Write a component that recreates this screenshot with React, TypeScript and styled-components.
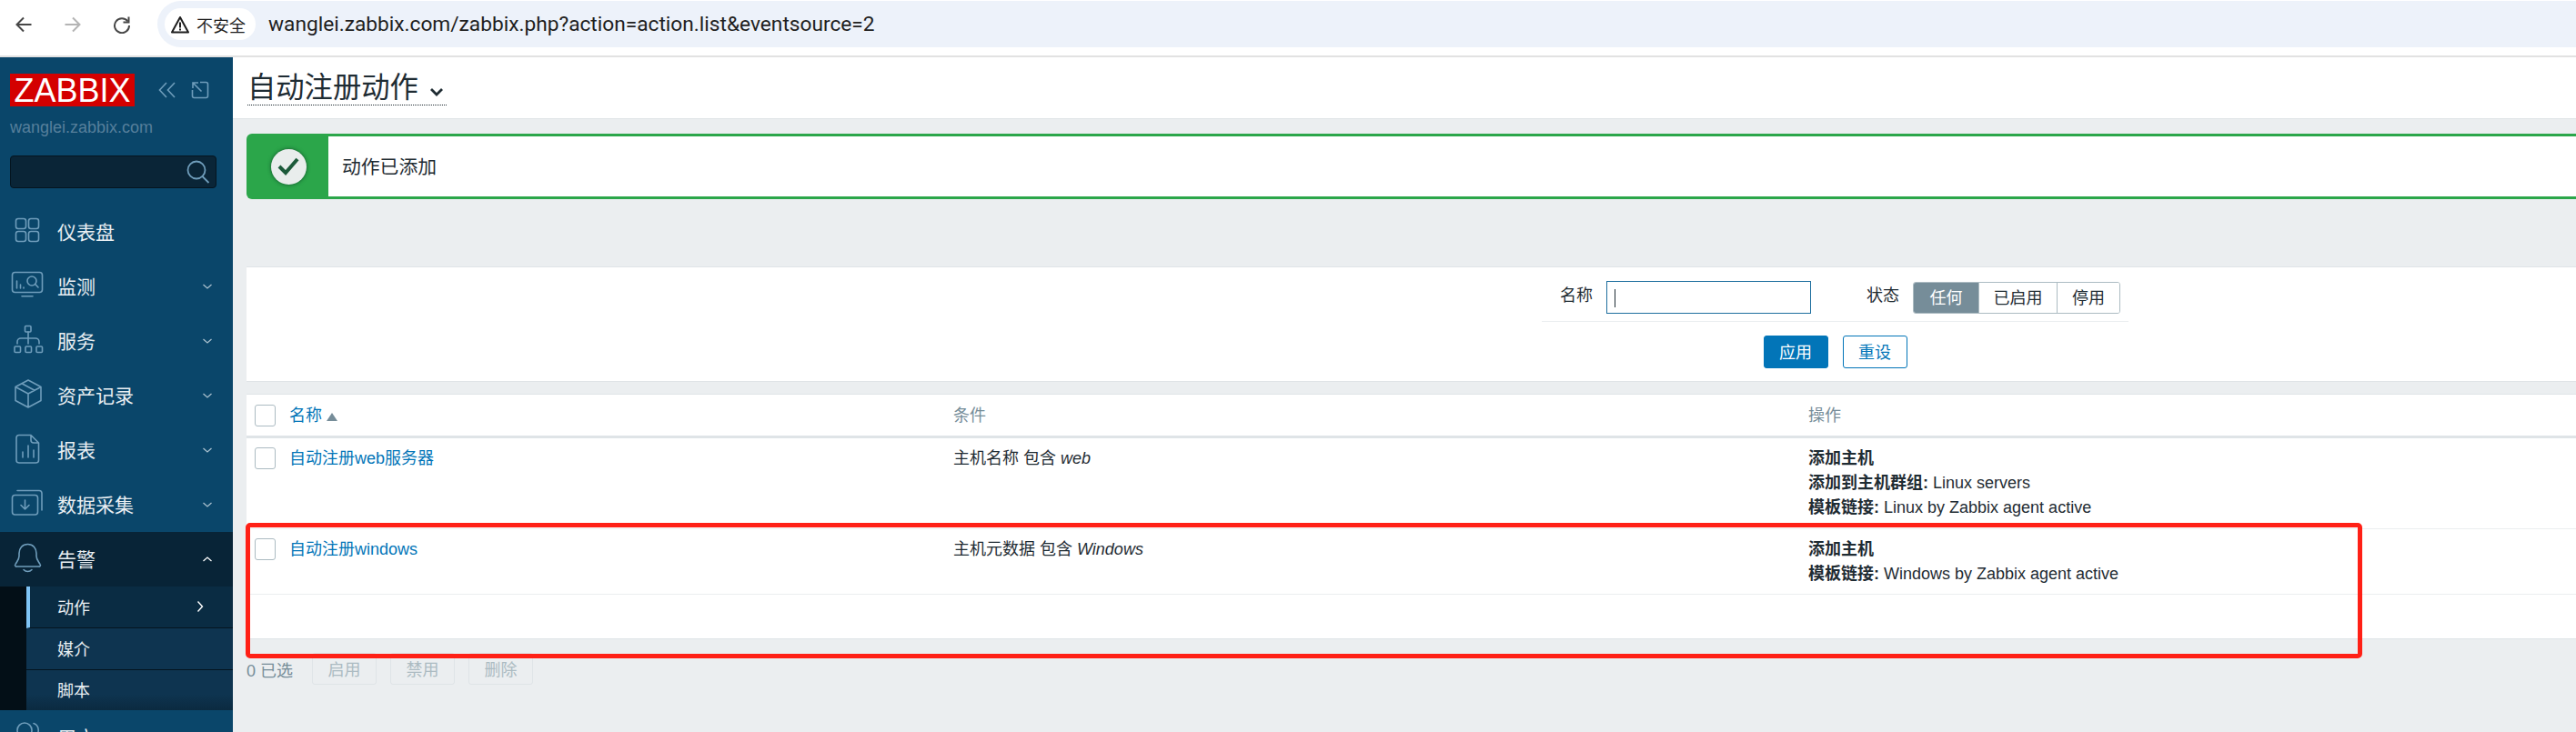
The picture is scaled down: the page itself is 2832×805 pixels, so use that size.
import React from "react"
import styled, { createGlobalStyle } from "styled-components"

const GlobalStyle = createGlobalStyle`
    html, body {
        margin: 0;
        height: 100%;
        overflow: hidden;
        background: #ebeef0;
        font-family: "Liberation Sans", "Noto Sans CJK SC", sans-serif;
        color: #1f2c33;
    }
    * {
        box-sizing: border-box;
    }
`

const Page = styled.div`
    position: relative;
    height: 805px;
    display: flex;
    flex-direction: column;
    overflow: hidden;
`

const Toolbar = styled.div`
    height: 63px;
    flex: none;
    display: flex;
    background: #fff;
    border-bottom: 2px solid #e2e2e2;
    padding-top: 1px;
`

const NavIcons = styled.div`
    width: 173px;
    height: 51px;
    flex: none;
    display: flex;
    align-items: center;
    padding-left: 16px;
    gap: 34px;
`

const AddressBar = styled.div`
    flex: 1;
    height: 51px;
    display: flex;
    align-items: center;
    background: #edf2fa;
    border-radius: 26px 0 0 26px;
    padding-left: 8px;
`

const SecurityChip = styled.div`
    width: 100px;
    height: 35px;
    display: flex;
    align-items: center;
    gap: 7px;
    padding-left: 6px;
    background: #fff;
    border-radius: 18px;
    font-size: 18px;
    color: #1f1f1f;
`

const Url = styled.div`
    margin-left: 14px;
    font-family: Roboto, sans-serif;
    font-size: 22.7px;
    color: #1f1f1f;
`

const Main = styled.div`
    flex: 1;
    display: flex;
    min-height: 0;
`

const Sidebar = styled.aside`
    width: 256px;
    flex: none;
    background: #0a466a;
    overflow: hidden;
`

const BrandRow = styled.div`
    display: flex;
    align-items: center;
    margin-top: 18px;
    padding-left: 11px;
    color: #6f9dbb;
`

const Logo = styled.div`
    width: 137px;
    height: 36px;
    background: #d40000;
    color: #fff;
    font-size: 36px;
    line-height: 37px;
    text-align: center;
    margin-right: 26px;
`

const HostName = styled.div`
    margin: 12px 0 0 11px;
    font-size: 18px;
    line-height: 22px;
    color: #567f9b;
`

const SearchBox = styled.div`
    display: flex;
    align-items: center;
    justify-content: flex-end;
    width: 227px;
    height: 36px;
    margin: 20px 0 18px 11px;
    padding-right: 6px;
    background: #0a2537;
    border: 1px solid #04141f;
    border-radius: 4px;
    color: #6f9dbb;
`

const MenuRow = styled.div<{ $open?: boolean }>`
    height: 60px;
    display: flex;
    align-items: center;
    padding-left: 10px;
    font-size: 21px;
    color: #e8eef2;
    background: ${p => (p.$open ? "#082437" : "transparent")};
`

const MenuIcon = styled.svg`
    width: 40px;
    height: 40px;
    flex: none;
    margin-right: 13px;
    fill: none;
    stroke: #6f9dbb;
    stroke-width: 1.6;
    stroke-linecap: round;
    stroke-linejoin: round;
`

const MenuLabel = styled.span`
    flex: 1;
    padding-bottom: 2px;
`

const Caret = styled.svg<{ $bright?: boolean }>`
    width: 12px;
    height: 8px;
    flex: none;
    margin-right: 22px;
    fill: none;
    stroke: ${p => (p.$bright ? "#fff" : "#a9c0ce")};
    stroke-width: 1.3;
`

const SubMenu = styled.div`
    padding-left: 29px;
    background: #030f17;
`

const SubItem = styled.div<{ $active?: boolean; $last?: boolean }>`
    height: ${p => (p.$last ? "44px" : "46px")};
    display: flex;
    align-items: center;
    padding-left: ${p => (p.$active ? "30px" : "34px")};
    padding-bottom: 2px;
    font-size: 18px;
    color: #e8eef2;
    border-left: ${p => (p.$active ? "4px solid #7fc4f5" : "0")};
    border-bottom: ${p => (p.$last ? "0" : "1px solid #04141f")};
    background: ${p =>
        p.$active
            ? "#0a2c43"
            : p.$last
            ? "linear-gradient(#0e3450 60%, #0b2a40)"
            : "#0e3450"};
`

const SubCaret = styled.svg`
    width: 8px;
    height: 14px;
    margin-left: auto;
    margin-right: 32px;
    fill: none;
    stroke: #fff;
    stroke-width: 1.4;
`

const Content = styled.main`
    flex: 1;
    min-width: 0;
`

const PageHeader = styled.header`
    height: 68px;
    background: #fff;
    border-bottom: 1px solid #dfe4e7;
    padding: 15px 0 0 16px;
`

const Title = styled.div`
    display: inline-flex;
    align-items: center;
    height: 38px;
    width: 219px;
    font-size: 31.3px;
    line-height: 38px;
    border-bottom: 1px dotted #1f2c33;
`

const TitleCaret = styled.svg`
    width: 16px;
    height: 10px;
    margin-left: 12px;
    margin-top: 8px;
    fill: none;
    stroke: #1f2c33;
    stroke-width: 2.8;
`

const Message = styled.div`
    display: flex;
    height: 72px;
    margin: 16px 0 74px 15px;
    background: #2ba64a;
    border-radius: 6px 0 0 6px;
`

const MessageIcon = styled.div`
    width: 90px;
    flex: none;
    display: flex;
    align-items: center;
    justify-content: center;
    padding-left: 2px;
`

const CheckCircle = styled.div`
    width: 39px;
    height: 39px;
    border-radius: 50%;
    display: flex;
    align-items: center;
    justify-content: center;
    background: #e9edec;
    box-shadow: 0 0 4px #14532d;
`

const MessageBody = styled.div`
    flex: 1;
    margin: 3px 0;
    display: flex;
    align-items: center;
    padding: 0 0 3px 15px;
    background: #fff;
    font-size: 20.8px;
`

const FilterPanel = styled.section`
    height: 127px;
    margin-left: 15px;
    padding: 15px 0 0 1424px;
    background: #fff;
    border-top: 1px solid #dfe4e7;
    border-bottom: 1px solid #dfe4e7;
`

const FilterInner = styled.div`
    width: 645px;
`

const FilterRow = styled.div`
    height: 45px;
    display: flex;
    align-items: flex-start;
    padding-left: 20px;
    border-bottom: 1px solid #ebeef0;
    font-size: 18px;
`

const FilterLabel = styled.label`
    line-height: 33px;
    margin-right: 15px;
`

const NameInput = styled.div`
    width: 225px;
    height: 36px;
    margin-right: 61px;
    padding: 8px 0 0 8px;
    border: 1px solid #1f6f9f;
`

const InputCursor = styled.div`
    width: 1px;
    height: 20px;
    background: #1f2c33;
`

const Segments = styled.div`
    display: flex;
    height: 35px;
    margin-top: 1px;
    border: 1px solid #acbbc2;
    border-radius: 3px;
    overflow: hidden;
`

const Segment = styled.div<{ $active?: boolean; $width: number }>`
    width: ${p => p.$width}px;
    display: flex;
    align-items: center;
    justify-content: center;
    padding-bottom: 3px;
    background: ${p => (p.$active ? "#768d99" : "#fff")};
    color: ${p => (p.$active ? "#fff" : "#1f2c33")};
    border-left: ${p => (p.$active ? "0" : "1px solid #acbbc2")};
`

const FilterActions = styled.div`
    display: flex;
    justify-content: center;
    gap: 16px;
    margin-top: 15px;
`

const Button = styled.button<{ $alt?: boolean }>`
    width: 71px;
    height: 36px;
    padding: 0 0 2px;
    font: inherit;
    font-size: 18px;
    border: 1px solid #0275b8;
    border-radius: 3px;
    background: ${p => (p.$alt ? "#fff" : "#0275b8")};
    color: ${p => (p.$alt ? "#0275b8" : "#fff")};
`

const ListTable = styled.table`
    width: calc(100% - 15px);
    margin: 13px 0 0 15px;
    border-collapse: separate;
    border-spacing: 0;
    table-layout: fixed;
    background: #fff;
    font-size: 18px;
`

const HeadCell = styled.th`
    height: 49px;
    padding: 0 0 3px;
    text-align: left;
    font-weight: normal;
    color: #768d99;
    border-top: 1px solid #dfe4e7;
    border-bottom: 3px solid #dfe4e7;
`

const CheckHeadCell = styled(HeadCell)`
    padding: 0;
`

const Cell = styled.td`
    padding: 9px 0 0;
    vertical-align: top;
    line-height: 27px;
    border-bottom: 1px solid #ebeef0;
`

const CheckCell = styled(Cell)`
    padding: 10px 0 0 9px;
    line-height: 0;
`

const LastCell = styled(Cell)`
    border-bottom: 1px solid #dfe4e7;
`

const CheckBox = styled.span`
    display: inline-block;
    width: 23px;
    height: 24px;
    border: 1px solid #acbbc2;
    border-radius: 3px;
    background: #fff;
    vertical-align: middle;
`

const HeadCheck = styled.div`
    padding-left: 9px;
    line-height: 0;
`

const SortLink = styled.span`
    color: #0275b8;
`

const SortArrow = styled.span`
    display: inline-block;
    margin-left: 5px;
    border-left: 6px solid transparent;
    border-right: 6px solid transparent;
    border-bottom: 9px solid #768d99;
`

const RowLink = styled.a`
    color: #0275b8;
`

const Footer = styled.div`
    display: flex;
    align-items: center;
    gap: 15px;
    margin: 15px 0 0 15px;
    font-size: 18px;
    color: #768d99;
`

const FooterCount = styled.span`
    margin-right: 6px;
`

const FooterButton = styled.button`
    width: 71px;
    height: 35px;
    padding: 0 0 2px;
    font: inherit;
    font-size: 18px;
    color: #acbbc2;
    background: #ebeef0;
    border: 1px solid #dfe4e7;
    border-radius: 3px;
`

const Highlight = styled.div`
    position: absolute;
    left: 270px;
    top: 575px;
    width: 2327px;
    height: 149px;
    border: 5.5px solid #ff2016;
    border-radius: 5px;
    pointer-events: none;
`

const BackIcon = () => (
    <svg width="20" height="20" viewBox="0 0 20 20" fill="none" stroke="#474747" strokeWidth="2">
        <path d="M18.5 10H2.5M10 2.5 2.5 10l7.500 7.500" />
    </svg>
)

const ForwardIcon = () => (
    <svg width="20" height="20" viewBox="0 0 20 20" fill="none" stroke="#b4b4b4" strokeWidth="2">
        <path d="M1.500 10h16M10 2.500l7.500 7.500-7.500 7.500" />
    </svg>
)

const ReloadIcon = () => (
    <svg width="20" height="20" viewBox="0 0 20 20" fill="none" stroke="#474747" strokeWidth="2">
        <path d="M16.500 6.500A8 8 0 1 0 18 11" />
        <path d="M17.500 1.500v6h-6" />
    </svg>
)

const WarningIcon = () => (
    <svg width="22" height="20" viewBox="0 0 22 20" fill="none" stroke="#1f1f1f" strokeWidth="2">
        <path d="M11 2 20 18.500H2z" strokeLinejoin="round" />
        <path d="M11 7.500v6M11 14.500v2" />
    </svg>
)

const icons: Record<string, React.ReactNode> = {
    dashboard: (
        <>
            <rect x="7.500" y="5.500" width="11" height="11" rx="2.500" />
            <rect x="21.500" y="5.500" width="11" height="11" rx="2.500" />
            <rect x="7.500" y="19.500" width="11" height="11" rx="2.500" />
            <rect x="21.500" y="19.500" width="11" height="11" rx="2.500" />
        </>
    ),
    monitoring: (
        <>
            <rect x="3.500" y="4.500" width="33" height="22" rx="3" />
            <path d="M14 30.700h12M8.500 14v8M12.500 18v4M16 21v1" />
            <circle cx="25" cy="14" r="5" />
            <path d="M28.700 17.500 32 21" />
        </>
    ),
    services: (
        <>
            <rect x="17.500" y="3.500" width="6.500" height="6.500" rx="1" />
            <rect x="6" y="26" width="6.500" height="6.500" rx="1" />
            <rect x="18" y="26" width="6.500" height="6.500" rx="1" />
            <rect x="30" y="26" width="6.500" height="6.500" rx="1" />
            <path d="M21 10v13M9 23v-2a4 4 0 0 1 4-4h16a4 4 0 0 1 4 4v2" />
        </>
    ),
    inventory: (
        <path d="M21 3 35 10.500v15L21 33 7 25.500v-15zM7 10.500 21 18l14-7.500M21 18v15M14 6.800l14 7.500" />
    ),
    reports: (
        <path d="M11 3.500h13l8.500 8.500v19a3 3 0 0 1-3 3H11a3 3 0 0 1-3-3V6.500a3 3 0 0 1 3-3zM24 3.500V9a3 3 0 0 0 3 3h5.500M15 22v6M21 15v13M27 20v8" />
    ),
    collection: (
        <>
            <rect x="3.500" y="9.500" width="28" height="21.500" rx="3" />
            <path d="M9 4.500h24a3 3 0 0 1 3 3V26M17.500 15v10M13 20.500l4.500 4.500 4.500-4.500" />
        </>
    ),
    alerts: (
        <path d="M20.500 3.500c-6 0-9.500 4.500-9.500 10v3c0 4-2.500 6-4 9a1.500 1.500 0 0 0 1.500 2.500h24a1.500 1.500 0 0 0 1.500-2.500c-1.500-3-4-5-4-9v-3c0-5.500-3.500-10-9.500-10zM16 31.500a6 6 0 0 0 9 0" />
    ),
    users: (
        <>
            <circle cx="17" cy="12" r="8" />
            <path d="M27 4.500a8 8 0 0 1 0 15" />
        </>
    ),
}

const menuTop = [
    { key: "dashboard", label: "仪表盘" },
    { key: "monitoring", label: "监测", caret: true },
    { key: "services", label: "服务", caret: true },
    { key: "inventory", label: "资产记录", caret: true },
    { key: "reports", label: "报表", caret: true },
    { key: "collection", label: "数据采集", caret: true },
]

const DownCaret = () => (
    <Caret viewBox="0 0 12 8">
        <path d="M1.500 2 6 6l4.500-4" />
    </Caret>
)

const App: React.FC = () => {
    return (
        <Page>
            <GlobalStyle />
            <Toolbar>
                <NavIcons>
                    <BackIcon />
                    <ForwardIcon />
                    <ReloadIcon />
                </NavIcons>
                <AddressBar>
                    <SecurityChip>
                        <WarningIcon />
                        不安全
                    </SecurityChip>
                    <Url>wanglei.zabbix.com/zabbix.php?action=action.list&amp;eventsource=2</Url>
                </AddressBar>
            </Toolbar>
            <Main>
                <Sidebar>
                    <BrandRow>
                        <Logo>ZABBIX</Logo>
                        <svg width="19" height="18" viewBox="0 0 19 18" fill="none" stroke="currentColor" strokeWidth="1.600">
                            <path d="M9 1 1.500 9 9 17M18 1l-7.500 8 7.500 8" />
                        </svg>
                        <svg width="20" height="20" viewBox="0 0 20 20" fill="none" stroke="currentColor" strokeWidth="1.600" style={{ marginLeft: 17 }}>
                            <path d="M10 1.500h6.500a2 2 0 0 1 2 2v13a2 2 0 0 1-2 2h-13a2 2 0 0 1-2-2V10M2 2l9.500 9.500M2 8V2h6" />
                        </svg>
                    </BrandRow>
                    <HostName>wanglei.zabbix.com</HostName>
                    <SearchBox>
                        <svg width="26" height="26" viewBox="0 0 26 26" fill="none" stroke="currentColor" strokeWidth="1.800">
                            <circle cx="11" cy="11" r="9.500" />
                            <path d="M17.500 18 24.500 25" />
                        </svg>
                    </SearchBox>
                    {menuTop.map(item => (
                        <MenuRow key={item.key}>
                            <MenuIcon viewBox="0 0 40 40">{icons[item.key]}</MenuIcon>
                            <MenuLabel>{item.label}</MenuLabel>
                            {item.caret && <DownCaret />}
                        </MenuRow>
                    ))}
                    <MenuRow $open>
                        <MenuIcon viewBox="0 0 40 40">{icons.alerts}</MenuIcon>
                        <MenuLabel>告警</MenuLabel>
                        <Caret $bright viewBox="0 0 12 8">
                            <path d="M1.500 6 6 2l4.500 4" />
                        </Caret>
                    </MenuRow>
                    <SubMenu>
                        <SubItem $active>
                            动作
                            <SubCaret viewBox="0 0 8 14">
                                <path d="M1.500 1.500 6.500 7l-5 5.500" />
                            </SubCaret>
                        </SubItem>
                        <SubItem>媒介</SubItem>
                        <SubItem $last>脚本</SubItem>
                    </SubMenu>
                    <MenuRow>
                        <MenuIcon viewBox="0 0 40 40">{icons.users}</MenuIcon>
                        <MenuLabel>用户</MenuLabel>
                    </MenuRow>
                </Sidebar>
                <Content>
                    <PageHeader>
                        <Title>
                            自动注册动作
                            <TitleCaret viewBox="0 0 16 10">
                                <path d="M2 2l6 6 6-6" />
                            </TitleCaret>
                        </Title>
                    </PageHeader>
                    <Message>
                        <MessageIcon>
                            <CheckCircle>
                                <svg width="24" height="20" viewBox="0 0 24 20" fill="none" stroke="#1c5a3a" strokeWidth="4">
                                    <path d="M2 10l7 7L22 2" />
                                </svg>
                            </CheckCircle>
                        </MessageIcon>
                        <MessageBody>动作已添加</MessageBody>
                    </Message>
                    <FilterPanel>
                        <FilterInner>
                            <FilterRow>
                                <FilterLabel>名称</FilterLabel>
                                <NameInput>
                                    <InputCursor />
                                </NameInput>
                                <FilterLabel>状态</FilterLabel>
                                <Segments>
                                    <Segment $active $width={71}>任何</Segment>
                                    <Segment $width={86}>已启用</Segment>
                                    <Segment $width={69}>停用</Segment>
                                </Segments>
                            </FilterRow>
                            <FilterActions>
                                <Button>应用</Button>
                                <Button $alt>重设</Button>
                            </FilterActions>
                        </FilterInner>
                    </FilterPanel>
                    <ListTable>
                        <colgroup>
                            <col style={{ width: 47 }} />
                            <col style={{ width: 730 }} />
                            <col style={{ width: 940 }} />
                            <col />
                        </colgroup>
                        <thead>
                            <tr>
                                <CheckHeadCell>
                                    <HeadCheck>
                                        <CheckBox />
                                    </HeadCheck>
                                </CheckHeadCell>
                                <HeadCell>
                                    <SortLink>名称</SortLink>
                                    <SortArrow />
                                </HeadCell>
                                <HeadCell>条件</HeadCell>
                                <HeadCell>操作</HeadCell>
                            </tr>
                        </thead>
                        <tbody>
                            <tr style={{ height: 100 }}>
                                <CheckCell>
                                    <CheckBox />
                                </CheckCell>
                                <Cell>
                                    <RowLink>自动注册web服务器</RowLink>
                                </Cell>
                                <Cell>
                                    主机名称 包含 <i>web</i>
                                </Cell>
                                <Cell>
                                    <b>添加主机</b>
                                    <br />
                                    <b>添加到主机群组:</b> Linux servers
                                    <br />
                                    <b>模板链接:</b> Linux by Zabbix agent active
                                </Cell>
                            </tr>
                            <tr style={{ height: 72 }}>
                                <CheckCell>
                                    <CheckBox />
                                </CheckCell>
                                <Cell>
                                    <RowLink>自动注册windows</RowLink>
                                </Cell>
                                <Cell>
                                    主机元数据 包含 <i>Windows</i>
                                </Cell>
                                <Cell>
                                    <b>添加主机</b>
                                    <br />
                                    <b>模板链接:</b> Windows by Zabbix agent active
                                </Cell>
                            </tr>
                            <tr style={{ height: 49 }}>
                                <LastCell colSpan={4} />
                            </tr>
                        </tbody>
                    </ListTable>
                    <Footer>
                        <FooterCount>0 已选</FooterCount>
                        <FooterButton disabled>启用</FooterButton>
                        <FooterButton disabled>禁用</FooterButton>
                        <FooterButton disabled>删除</FooterButton>
                    </Footer>
                </Content>
            </Main>
            <Highlight />
        </Page>
    )
}

export default App
